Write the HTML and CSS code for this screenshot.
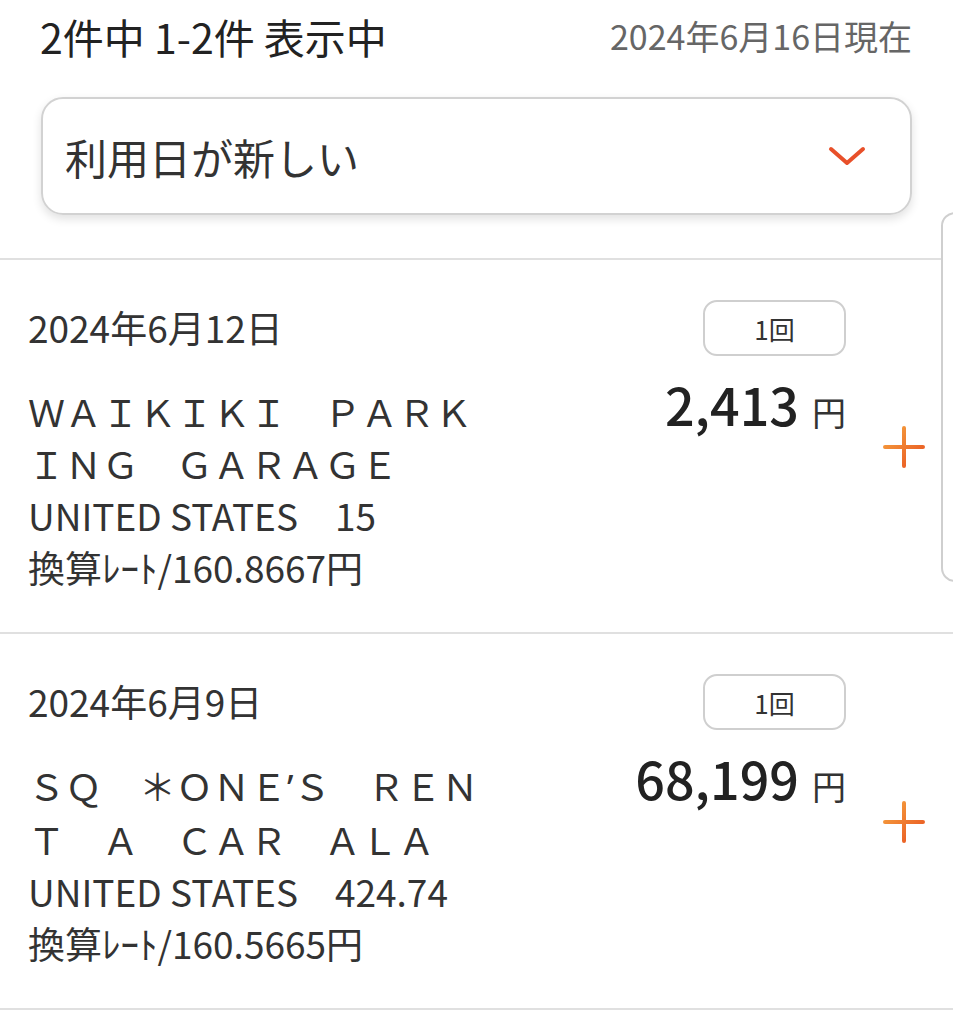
FILE: index.html
```html
<!DOCTYPE html>
<html lang="ja">
<head>
    <meta charset="UTF-8">
    <meta name="viewport" content="width=device-width, initial-scale=1.0">
    <title>ご利用明細</title>
    <link rel="stylesheet" href="styles.css">
</head>
<body>
    <header class="summary">
        <p class="count">2件中 1-2件 表示中</p>
        <p class="as-of">2024年6月16日現在</p>
    </header>

    <div class="sort">
        <span>利用日が新しい</span>
        <svg class="chevron" width="38" height="22" viewBox="0 0 38 22">
            <polyline points="3,4 19,18 35,4" fill="none" stroke="#e8502a" stroke-width="4" stroke-linecap="round" stroke-linejoin="round"/>
        </svg>
    </div>

    <ul class="usage-list">
        <li class="usage">
            <div class="info">
                <p class="date">2024年6月12日</p>
                <p class="name">ＷＡＩＫＩＫＩ　ＰＡＲＫＩＮＧ　ＧＡＲＡＧＥ</p>
                <p class="detail">UNITED STATES　15</p>
                <p class="detail">換算ﾚｰﾄ/160.8667円</p>
            </div>
            <div class="price">
                <span class="times">1回</span>
                <p class="amount"><span class="num">2,413</span><span class="yen">円</span></p>
            </div>
            <button class="expand">
                <svg width="44" height="44" viewBox="0 0 44 44">
                    <defs>
                        <linearGradient id="plus1" x1="0" y1="0" x2="1" y2="1">
                            <stop offset="0" stop-color="#f6a640"/>
                            <stop offset="1" stop-color="#e8501f"/>
                        </linearGradient>
                    </defs>
                    <path d="M22 3 V41 M3 22 H41" stroke="url(#plus1)" stroke-width="4" stroke-linecap="round"/>
                </svg>
            </button>
        </li>
        <li class="usage">
            <div class="info">
                <p class="date">2024年6月9日</p>
                <p class="name">ＳＱ　＊ＯＮＥ<span class="quote">’</span>Ｓ　ＲＥＮＴ　Ａ　ＣＡＲ　ＡＬＡ</p>
                <p class="detail">UNITED STATES　424.74</p>
                <p class="detail">換算ﾚｰﾄ/160.5665円</p>
            </div>
            <div class="price">
                <span class="times">1回</span>
                <p class="amount"><span class="num">68,199</span><span class="yen">円</span></p>
            </div>
            <button class="expand">
                <svg width="44" height="44" viewBox="0 0 44 44">
                    <defs>
                        <linearGradient id="plus2" x1="0" y1="0" x2="1" y2="1">
                            <stop offset="0" stop-color="#f6a640"/>
                            <stop offset="1" stop-color="#e8501f"/>
                        </linearGradient>
                    </defs>
                    <path d="M22 3 V41 M3 22 H41" stroke="url(#plus2)" stroke-width="4" stroke-linecap="round"/>
                </svg>
            </button>
        </li>
    </ul>

    <div class="side-peek"></div>
</body>
</html>
```

FILE: styles.css
```css
body {
    margin: 0;
    font-family: "Noto Sans CJK JP", sans-serif;
    color: #333;
    background-color: #fff;
    position: relative;
    overflow: hidden;
}
p {
    margin: 0;
}
.summary {
    display: flex;
    justify-content: space-between;
    align-items: center;
    height: 48px;
    padding: 12px 41px 0 40px;
}
.count {
    font-size: 41px;
    line-height: 48px;
    color: #222;
}
.as-of {
    font-size: 34px;
    line-height: 48px;
    color: #666;
}
.sort {
    display: flex;
    justify-content: space-between;
    align-items: center;
    height: 118px;
    box-sizing: border-box;
    margin: 37px 41px 0;
    padding: 0 44px 0 22px;
    border: 2px solid #d2d2d2;
    border-radius: 22px;
    box-shadow: 0 4px 10px rgba(0, 0, 0, 0.12);
    font-size: 42px;
}
.usage-list {
    list-style: none;
    margin: 43px 0 0;
    padding: 0;
    border-top: 2px solid #e0e0e0;
}
.usage {
    display: flex;
    align-items: flex-start;
    padding: 40px 27px 39px 28px;
    border-bottom: 2px solid #e0e0e0;
}
.info {
    flex: 1;
}
.date {
    font-size: 37px;
    line-height: 54px;
}
.name {
    max-width: 470px;
    margin-top: 31px;
    font-size: 37px;
    line-height: 52px;
}
.quote {
    font-family: "Noto Sans", sans-serif;
}
.detail {
    font-size: 37px;
    line-height: 52px;
}
.price {
    display: flex;
    flex-direction: column;
    align-items: flex-end;
}
.times {
    display: flex;
    justify-content: center;
    align-items: center;
    width: 143px;
    height: 56px;
    box-sizing: border-box;
    border: 2px solid #cfcfcf;
    border-radius: 14px;
    font-size: 26px;
}
.amount {
    display: flex;
    align-items: baseline;
    margin-top: 16px;
}
.num {
    font-size: 52px;
    line-height: 64px;
    font-weight: 500;
    color: #222;
}
.yen {
    margin-left: 13px;
    font-size: 34px;
}
.expand {
    align-self: center;
    width: 44px;
    height: 44px;
    margin-left: 36px;
    padding: 0;
    border: none;
    background: none;
    cursor: pointer;
}
.expand svg {
    display: block;
}
.side-peek {
    position: absolute;
    top: 212px;
    left: 941px;
    width: 40px;
    height: 366px;
    border: 2px solid #cfcfcf;
    border-radius: 14px;
    background-color: #fff;
}
```
